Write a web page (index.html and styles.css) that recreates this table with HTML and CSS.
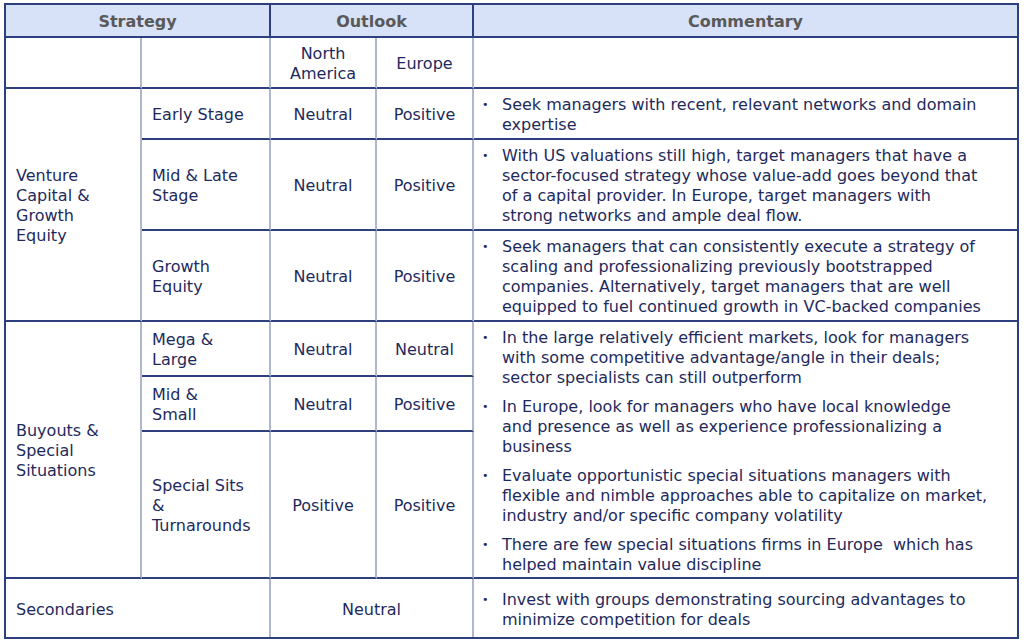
FILE: index.html
```html
<!DOCTYPE html>
<html lang="en">
<head>
<meta charset="utf-8">
<title>Private Equity Outlook</title>
<link rel="stylesheet" href="styles.css">
</head>
<body>
<div class="matrix">
  <div class="cell head span-c2">Strategy</div>
  <div class="cell head span-c2">Outlook</div>
  <div class="cell head last">Commentary</div>

  <div class="cell"></div>
  <div class="cell"></div>
  <div class="cell center">North<br>America</div>
  <div class="cell center">Europe</div>
  <div class="cell last"></div>

  <div class="cell span-r3">Venture<br>Capital &amp;<br>Growth<br>Equity</div>
  <div class="cell">Early Stage</div>
  <div class="cell center">Neutral</div>
  <div class="cell center">Positive</div>
  <div class="cell comment last">
    <ul>
      <li>Seek managers with recent, relevant networks and domain<br>expertise</li>
    </ul>
  </div>

  <div class="cell">Mid &amp; Late<br>Stage</div>
  <div class="cell center">Neutral</div>
  <div class="cell center">Positive</div>
  <div class="cell comment last">
    <ul>
      <li>With US valuations still high, target managers that have a<br>sector-focused strategy whose value-add goes beyond that<br>of a capital provider. In Europe, target managers with<br>strong networks and ample deal flow.</li>
    </ul>
  </div>

  <div class="cell">Growth<br>Equity</div>
  <div class="cell center">Neutral</div>
  <div class="cell center">Positive</div>
  <div class="cell comment last">
    <ul>
      <li>Seek managers that can consistently execute a strategy of<br>scaling and professionalizing previously bootstrapped<br>companies. Alternatively, target managers that are well<br>equipped to fuel continued growth in VC-backed companies</li>
    </ul>
  </div>

  <div class="cell span-r3">Buyouts &amp;<br>Special<br>Situations</div>
  <div class="cell">Mega &amp;<br>Large</div>
  <div class="cell center">Neutral</div>
  <div class="cell center">Neutral</div>
  <div class="cell comment last span-r3">
    <ul>
      <li>In the large relatively efficient markets, look for managers<br>with some competitive advantage/angle in their deals;<br>sector specialists can still outperform</li>
      <li>In Europe, look for managers who have local knowledge<br>and presence as well as experience professionalizing a<br>business</li>
      <li>Evaluate opportunistic special situations managers with<br>flexible and nimble approaches able to capitalize on market,<br>industry and/or specific company volatility</li>
      <li>There are few special situations firms in Europe&nbsp; which has<br>helped maintain value discipline</li>
    </ul>
  </div>

  <div class="cell">Mid &amp;<br>Small</div>
  <div class="cell center">Neutral</div>
  <div class="cell center">Positive</div>

  <div class="cell">Special Sits<br>&amp;<br>Turnarounds</div>
  <div class="cell center">Positive</div>
  <div class="cell center">Positive</div>

  <div class="cell span-c2 bottom">Secondaries</div>
  <div class="cell center span-c2 bottom">Neutral</div>
  <div class="cell comment last bottom">
    <ul>
      <li>Invest with groups demonstrating sourcing advantages to<br>minimize competition for deals</li>
    </ul>
  </div>
</div>
</body>
</html>
```

FILE: styles.css
```css
html, body {
  margin: 0;
  padding: 0;
  background: #ffffff;
}

body {
  font-family: "DejaVu Sans", Verdana, sans-serif;
  font-size: 16px;
  line-height: 20px;
  color: #1e2a5c;
}

.matrix {
  margin: 3px 0 0 4px;
  width: 1015px;
  box-sizing: border-box;
  border: 2px solid #2d3f7c;
  display: grid;
  grid-template-columns: 136px 129px 106px 97px 543px;
  grid-template-rows: 33px 51px 51px 91px 91px 55px 55px 147px 58px;
}

.cell {
  box-sizing: border-box;
  display: flex;
  align-items: center;
  padding: 2px 10px 0 10px;
  border-right: 2px solid #aeb7cd;
  border-bottom: 2px solid #2d3f7c;
  min-width: 0;
  white-space: nowrap;
}

.cell.last {
  border-right: none;
}

.cell.bottom {
  border-bottom: none;
  padding-top: 3px;
}

.cell.center {
  justify-content: center;
  text-align: center;
}

.head {
  background: #d7e1f8;
  color: #595959;
  font-weight: bold;
  justify-content: center;
  padding-top: 3px;
  border-right-color: #2d3f7c;
}

.span-c2 {
  grid-column: span 2;
}

.span-r3 {
  grid-row: span 3;
}

.comment {
  padding: 3px 10px 0 10px;
}

.comment.bottom {
  padding-top: 4px;
}

.comment ul {
  list-style: none;
  margin: 0;
  padding: 0;
}

.comment li {
  position: relative;
  padding-left: 18px;
}

.comment li + li {
  margin-top: 9px;
}

.comment li::before {
  content: "\2022";
  position: absolute;
  left: -2px;
  top: 0;
  font-size: 11px;
  line-height: 20px;
}
```
